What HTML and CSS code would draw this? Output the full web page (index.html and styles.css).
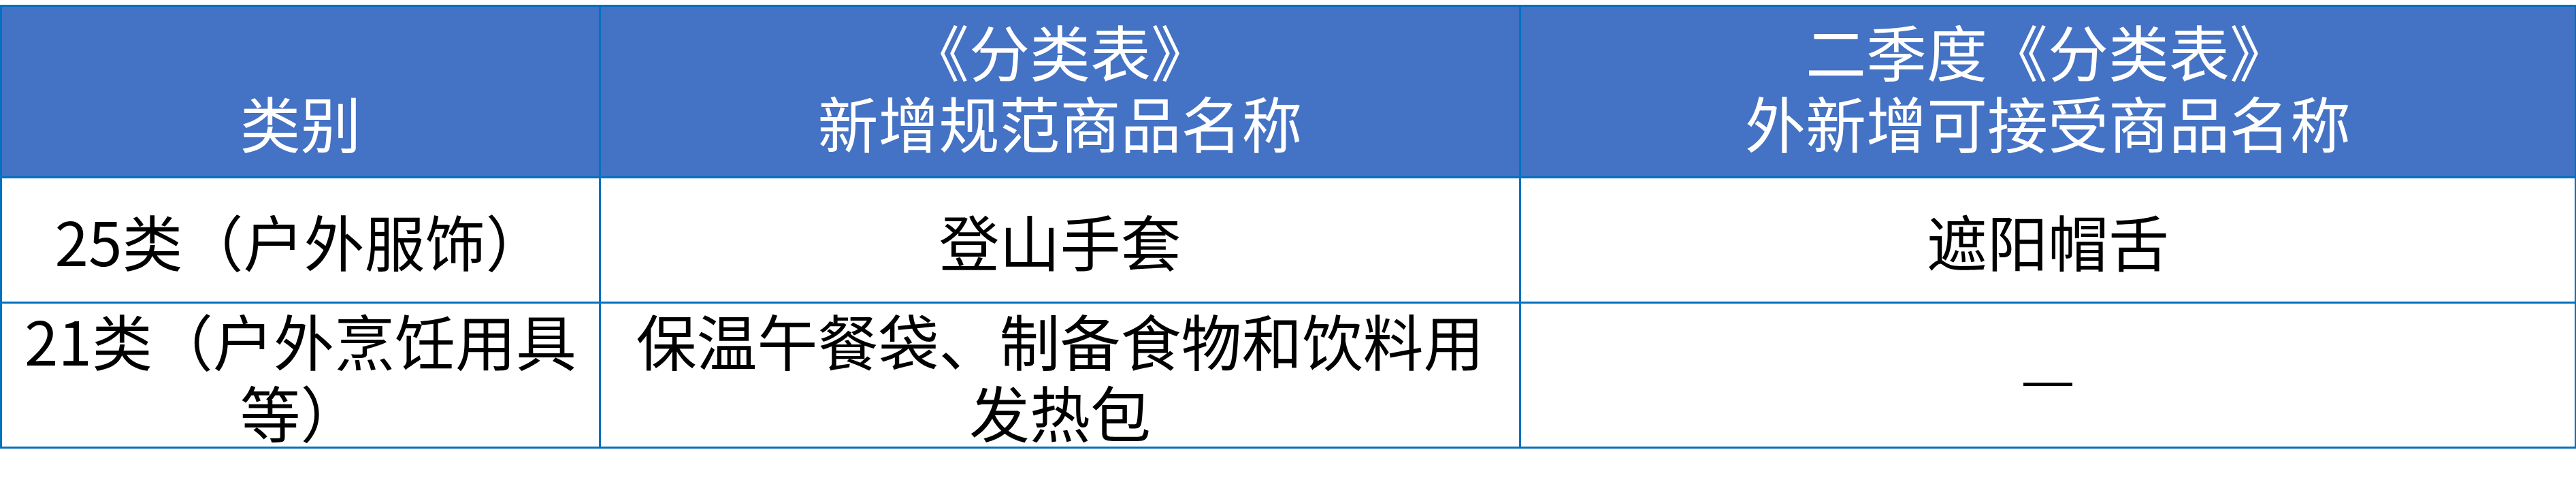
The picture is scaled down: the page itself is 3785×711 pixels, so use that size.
FILE: index.html
```html
<!DOCTYPE html>
<html lang="zh-CN">
<head>
<meta charset="utf-8">
<title>分类表</title>
<link rel="stylesheet" href="styles.css">
</head>
<body>
<table class="grid">
  <colgroup>
    <col class="c1">
    <col class="c2">
    <col class="c3">
  </colgroup>
  <thead>
    <tr class="head">
      <th>类别</th>
      <th class="two">《分类表》
新增规范商品名称</th>
      <th class="two">二季度《分类表》
外新增可接受商品名称</th>
    </tr>
  </thead>
  <tbody>
    <tr class="r1">
      <td>25类（户外服饰）</td>
      <td>登山手套</td>
      <td>遮阳帽舌</td>
    </tr>
    <tr class="r2">
      <td>21类（户外烹饪用具等）</td>
      <td>保温午餐袋、制备食物和饮料用发热包</td>
      <td><span class="dash">—</span></td>
    </tr>
  </tbody>
</table>
</body>
</html>
```

FILE: styles.css
```css
html, body {
  margin: 0;
  padding: 0;
  background: #ffffff;
}
body {
  padding-top: 7px;
  font-family: "Noto Sans CJK SC", "Noto Sans", sans-serif;
}
.grid {
  border-collapse: collapse;
  table-layout: fixed;
  width: 3783px;
  border: 3px solid #0070c0;
  font-size: 89px;
  line-height: 105px;
}
.c1 { width: 880px; }
.c2 { width: 1352px; }
.c3 { width: 1551px; }
.grid th,
.grid td {
  border: 3px solid #0070c0;
  padding: 0 17px;
  text-align: center;
  font-weight: 400;
}
.head th {
  height: 252px;
  background: #4472c4;
  color: #ffffff;
  vertical-align: bottom;
  padding-bottom: 28px;
  box-sizing: border-box;
}
.head th.two {
  white-space: pre-line;
}
.r1 td {
  height: 184px;
  vertical-align: middle;
  color: #000000;
  box-sizing: border-box;
}
.r2 td {
  height: 211px;
  vertical-align: middle;
  color: #000000;
  box-sizing: border-box;
}
.dash {
  font-family: "Liberation Sans", sans-serif;
  font-size: 72px;
}
```
